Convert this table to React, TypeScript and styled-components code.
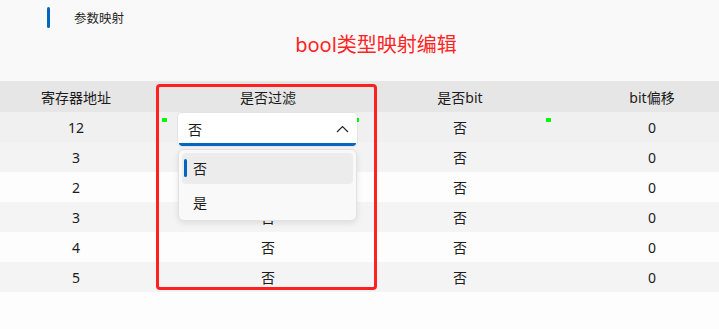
import styled, { createGlobalStyle } from "styled-components";

const GlobalStyle = createGlobalStyle`
  html, body {
    margin: 0;
    padding: 0;
    background: #fdfdfd;
  }
  body {
    font-family: "Noto Sans", "Noto Sans CJK SC", sans-serif;
    color: #1b1b1b;
  }
`;

const Page = styled.div`
  width: 719px;
  height: 329px;
  overflow: hidden;
  background: linear-gradient(#f9f9f9 0 81px, #fdfdfd 81px);
`;

const TopBar = styled.div`
  height: 31px;
  display: flex;
  align-items: flex-start;
  gap: 24px;
  padding: 7px 0 0 47px;
  box-sizing: border-box;
`;

const Accent = styled.span`
  width: 3px;
  height: 21px;
  border-radius: 2px;
  background: #0067c0;
`;

const Crumb = styled.span`
  font-size: 12.5px;
  line-height: 24px;
  color: #1f1f1f;
`;

const Title = styled.h1`
  margin: 0 0 22px;
  padding-left: 33px;
  height: 28px;
  line-height: 28px;
  text-align: center;
  font-size: 20px;
  font-weight: 400;
  color: #ff2424;
`;

const TableWrap = styled.div`
  position: relative;
  overflow: hidden;
`;

const Grid = styled.div`
  width: 768px;
  margin-left: -20px;
`;

const Row = styled.div<{ $bg: string; $h?: number }>`
  display: grid;
  grid-template-columns: repeat(4, 192px);
  height: ${(p) => p.$h ?? 30}px;
  background: ${(p) => p.$bg};
`;

const Cell = styled.div`
  display: flex;
  align-items: center;
  justify-content: center;
  font-size: 14px;
`;

const Marker = styled.span<{ $x: number }>`
  position: absolute;
  top: 37px;
  left: ${(p) => p.$x}px;
  width: 5px;
  height: 4px;
  background: #00ff00;
`;

const Highlight = styled.div`
  position: absolute;
  left: 156px;
  top: 3px;
  width: 221px;
  height: 206px;
  box-sizing: border-box;
  border: 3px solid #ff2020;
  border-radius: 4px;
  z-index: 3;
  pointer-events: none;
`;

const Combo = styled.div`
  position: absolute;
  left: 178px;
  top: 32px;
  width: 179px;
  height: 33px;
  box-sizing: border-box;
  display: flex;
  align-items: center;
  justify-content: space-between;
  padding: 0 8px 2px 10px;
  background: #ffffff;
  border-radius: 4px;
  box-shadow: 0 0 0 1px rgba(0, 0, 0, 0.05);
  font-size: 14px;
  z-index: 2;
  overflow: hidden;

  &::after {
    content: "";
    position: absolute;
    left: 1px;
    right: 1px;
    bottom: 0;
    height: 3px;
    border-radius: 0 0 3px 3px;
    background: #0067c0;
  }
`;

const Popup = styled.div`
  position: absolute;
  left: 178px;
  top: 68px;
  width: 179px;
  height: 72px;
  box-sizing: border-box;
  padding: 3px;
  display: flex;
  flex-direction: column;
  gap: 3px;
  background: #f9f9f9;
  border: 1px solid #e2e2e2;
  border-radius: 6px;
  box-shadow: 0 2px 6px rgba(0, 0, 0, 0.1);
  z-index: 2;
`;

const Option = styled.div<{ $active?: boolean }>`
  position: relative;
  height: 31px;
  display: flex;
  align-items: center;
  padding-left: 11px;
  border-radius: 4px;
  font-size: 14px;
  background: ${(p) => (p.$active ? "#ececec" : "transparent")};

  &::before {
    content: "";
    display: ${(p) => (p.$active ? "block" : "none")};
    position: absolute;
    left: 2px;
    top: 6px;
    width: 3px;
    height: 18px;
    border-radius: 2px;
    background: #0067c0;
  }
`;

const rows = [
  { addr: "12", filter: "否", bit: "否", offset: "0", bg: "#f0f0f0" },
  { addr: "3", filter: "否", bit: "否", offset: "0", bg: "#f3f3f3" },
  { addr: "2", filter: "否", bit: "否", offset: "0", bg: "#fdfdfd" },
  { addr: "3", filter: "否", bit: "否", offset: "0", bg: "#f4f4f4" },
  { addr: "4", filter: "否", bit: "否", offset: "0", bg: "#fdfdfd" },
  { addr: "5", filter: "否", bit: "否", offset: "0", bg: "#f4f4f4" },
];

export default function App() {
  return (
    <Page>
      <GlobalStyle />
      <TopBar>
        <Accent />
        <Crumb>参数映射</Crumb>
      </TopBar>
      <Title>bool类型映射编辑</Title>
      <TableWrap>
        <Grid>
          <Row $bg="#e6e6e6" $h={31}>
            <Cell>寄存器地址</Cell>
            <Cell>是否过滤</Cell>
            <Cell>是否bit</Cell>
            <Cell>bit偏移</Cell>
          </Row>
          {rows.map((r, i) => (
            <Row key={i} $bg={r.bg}>
              <Cell>{r.addr}</Cell>
              <Cell>{r.filter}</Cell>
              <Cell>{r.bit}</Cell>
              <Cell>{r.offset}</Cell>
            </Row>
          ))}
        </Grid>
        <Marker $x={162} />
        <Marker $x={354} />
        <Marker $x={546} />
        <Combo>
          <span>否</span>
          <svg width="13" height="8" viewBox="0 0 13 8">
            <path d="M1 7 L6.5 1.5 L12 7" fill="none" stroke="#222" strokeWidth="1.1" />
          </svg>
        </Combo>
        <Popup>
          <Option $active>否</Option>
          <Option>是</Option>
        </Popup>
        <Highlight />
      </TableWrap>
    </Page>
  );
}
